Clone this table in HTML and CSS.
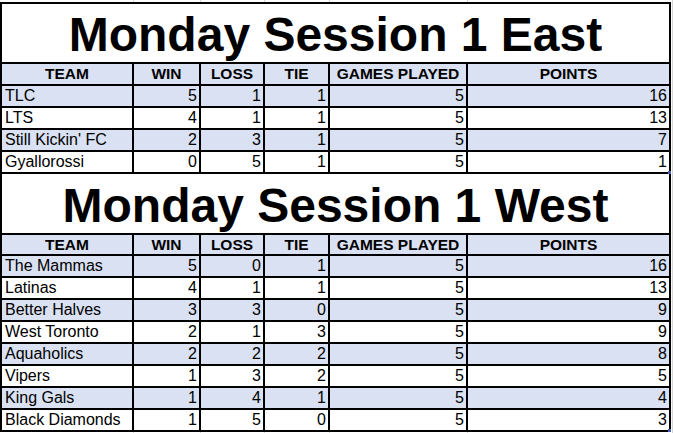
FILE: index.html
```html
<!DOCTYPE html>
<html lang="en">
<head>
<meta charset="utf-8">
<title>Monday Session 1 Standings</title>
<link rel="stylesheet" href="styles.css">
</head>
<body>
<div class="sheet">
  <div class="title">Monday Session 1 East</div>
  <div class="hd">TEAM</div><div class="hd">WIN</div><div class="hd">LOSS</div><div class="hd">TIE</div><div class="hd">GAMES PLAYED</div><div class="hd">POINTS</div>

  <div class="c t alt">TLC</div><div class="c alt">5</div><div class="c alt">1</div><div class="c alt">1</div><div class="c alt">5</div><div class="c alt">16</div>
  <div class="c t">LTS</div><div class="c">4</div><div class="c">1</div><div class="c">1</div><div class="c">5</div><div class="c">13</div>
  <div class="c t alt">Still Kickin' FC</div><div class="c alt">2</div><div class="c alt">3</div><div class="c alt">1</div><div class="c alt">5</div><div class="c alt">7</div>
  <div class="c t">Gyallorossi</div><div class="c">0</div><div class="c">5</div><div class="c">1</div><div class="c">5</div><div class="c last">1</div>

  <div class="title title2">Monday Session 1 West</div>
  <div class="hd hd2">TEAM</div><div class="hd hd2">WIN</div><div class="hd hd2">LOSS</div><div class="hd hd2">TIE</div><div class="hd hd2">GAMES PLAYED</div><div class="hd hd2">POINTS</div>

  <div class="c t alt">The Mammas</div><div class="c alt">5</div><div class="c alt">0</div><div class="c alt">1</div><div class="c alt">5</div><div class="c alt">16</div>
  <div class="c t">Latinas</div><div class="c">4</div><div class="c">1</div><div class="c">1</div><div class="c">5</div><div class="c">13</div>
  <div class="c t alt">Better Halves</div><div class="c alt">3</div><div class="c alt">3</div><div class="c alt">0</div><div class="c alt">5</div><div class="c alt">9</div>
  <div class="c t">West Toronto</div><div class="c">2</div><div class="c">1</div><div class="c">3</div><div class="c">5</div><div class="c">9</div>
  <div class="c t alt">Aquaholics</div><div class="c alt">2</div><div class="c alt">2</div><div class="c alt">2</div><div class="c alt">5</div><div class="c alt">8</div>
  <div class="c t">Vipers</div><div class="c">1</div><div class="c">3</div><div class="c">2</div><div class="c">5</div><div class="c">5</div>
  <div class="c t alt">King Gals</div><div class="c alt">1</div><div class="c alt">4</div><div class="c alt">1</div><div class="c alt">5</div><div class="c alt">4</div>
  <div class="c t">Black Diamonds</div><div class="c">1</div><div class="c">5</div><div class="c">0</div><div class="c">5</div><div class="c last">3</div>
</div>
</body>
</html>
```

FILE: styles.css
```css
html, body {
  margin: 0;
  padding: 0;
}

body {
  width: 673px;
  height: 433px;
  overflow: hidden;
  background-color: #ffffff;
  background-image:
    linear-gradient(to right,
      transparent 133px, #d4d4d4 133px, #d4d4d4 134px, transparent 134px,
      transparent 200px, #d4d4d4 200px, #d4d4d4 201px, transparent 201px,
      transparent 264px, #d4d4d4 264px, #d4d4d4 265px, transparent 265px,
      transparent 329px, #d4d4d4 329px, #d4d4d4 330px, transparent 330px,
      transparent 467px, #d4d4d4 467px, #d4d4d4 468px, transparent 468px,
      transparent 672px, #d4d4d4 672px, #d4d4d4 673px, transparent 673px);
  font-family: "Liberation Sans", Arial, sans-serif;
  color: #000;
}

.sheet {
  margin-top: 2px;
  width: 671px;
  display: grid;
  grid-template-columns: 130px 65px 62px 63px 136px 201px;
  grid-auto-rows: auto;
  gap: 2px;
  padding: 2px;
  box-sizing: border-box;
  background: #000;
}

.title {
  grid-column: 1 / -1;
  height: 58px;
  box-sizing: border-box;
  padding-top: 3px;
  line-height: 55px;
  background: #fff;
  text-align: center;
  font-weight: bold;
  font-size: 48px;
  white-space: nowrap;
}

.title2 {
  height: 59px;
  padding-top: 4px;
}

.hd {
  height: 20px;
  background: #d9e1f2;
  font-weight: bold;
  font-size: 15.5px;
  line-height: 20px;
  text-align: center;
  white-space: nowrap;
}

.hd2 {
  height: 19px;
  line-height: 19px;
}

.c {
  height: 20px;
  background: #fff;
  font-size: 16px;
  line-height: 20px;
  text-align: right;
  padding: 0 2px 0 3px;
  white-space: nowrap;
  position: relative;
}

.c.t {
  text-align: left;
}

.c.alt {
  background: #d9e1f2;
}

.c.last::after {
  content: "";
  position: absolute;
  right: -2px;
  bottom: -2px;
  width: 3px;
  height: 3px;
  background: #4a5fb8;
}
```
